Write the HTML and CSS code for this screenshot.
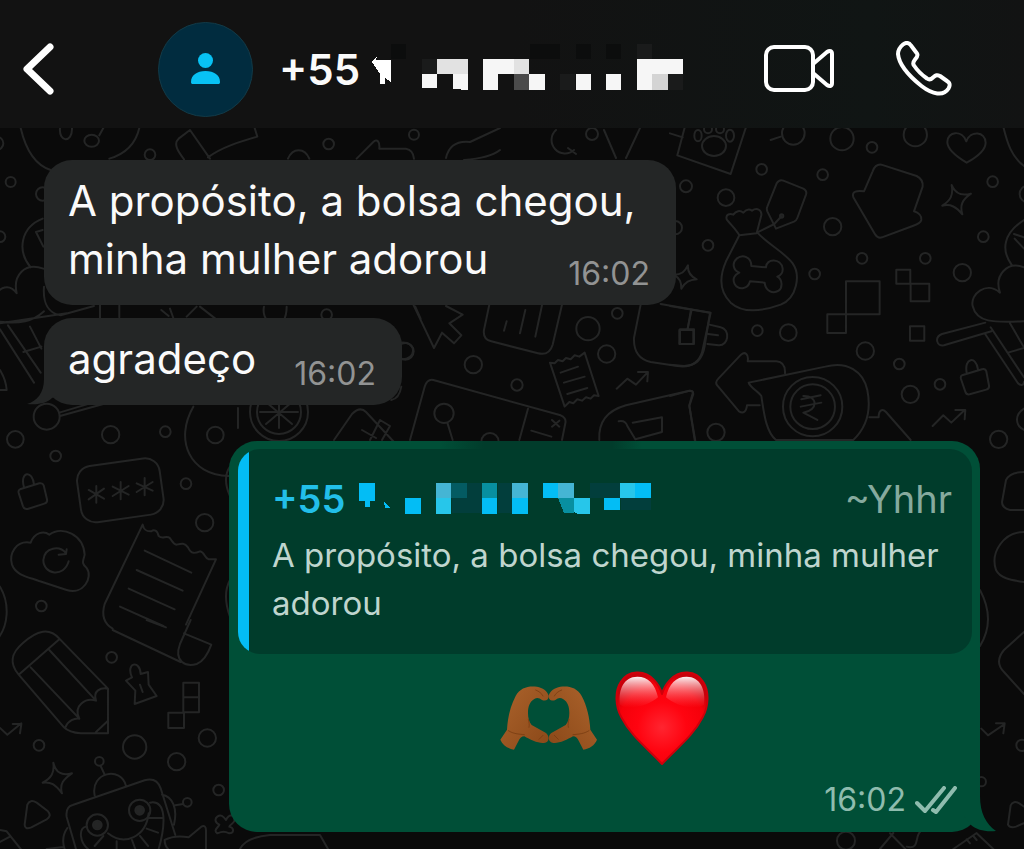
FILE: index.html
```
<!DOCTYPE html>
<html lang="pt-BR">
<head>
    <meta charset="UTF-8">
    <meta name="viewport" content="width=device-width, initial-scale=1.0">
    <title>Chat</title>
    <link rel="stylesheet" href="styles.css">
</head>
<body>
    <header class="chat-header">
        <button class="icon-button back" type="button" aria-label="Voltar">
            <svg width="32" height="52" viewBox="0 0 32 52"><path d="M28 4 5 26 28 48"/></svg>
        </button>
        <svg class="avatar" width="95" height="95" viewBox="0 0 95 95" role="img" aria-label="Contato">
            <circle class="avatar-bg" cx="47.500" cy="47.500" r="47"/>
            <circle cx="47.500" cy="38.500" r="7.500"/>
            <path d="M33 60c0-7 6-11 14.500-11S62 53 62 60c0 1.500-.5 2-2 2H35c-1.500 0-2-.5-2-2Z"/>
        </svg>
        <h1 class="contact">
            <span>+55</span>
            <svg class="mosaic" width="312" height="50" viewBox="0 0 312 50" aria-hidden="true">
                <path fill="#0c0d0d" d="M19 0h15v15H19zM158 0h30v15h-30zM204 0h15v15h-15zM234 0h15v15h-15z"/>
                <path fill="#1a1b1b" d="M50 15h15v15H50zM188 30h15v16h-15zM296 30h15v16h-15zM265 0h15v15h-15z"/>
                <path fill="#fff" d="M0 18l5-6-1 4h15v22l-6-4v6H8V30z"/>
                <path fill="#f6f6f6" d="M50 30h15v14H50zM81 30h15v16l-15-1zM111 15h46v15h-31v16h-15zM157 30h16v16h-16zM204 30h15v16h-15zM234 30h15v16h-15zM265 15h46v15h-31v16h-15z"/>
                <path fill="#e2e2e2" d="M65 15h31v15H65zM142 15h15v15h-15z"/>
                <path fill="#4b4b4b" d="M142 30h15v16h-15z"/>
                <path fill="#d4d4d4" d="M280 30h16v16h-16z"/>
            </svg>
        </h1>
        <button class="icon-button" type="button" aria-label="Chamada de vídeo">
            <svg width="70" height="48" viewBox="0 0 70 48">
                <rect x="2" y="2" width="47" height="43" rx="8"/>
                <path d="M49 19 63 7c3-2 5-1 5 2v29c0 3-2 4-5 2L49 28"/>
            </svg>
        </button>
        <button class="icon-button" type="button" aria-label="Chamada de voz">
            <svg width="56" height="56" viewBox="0 0 56 56">
                <path d="M7 3.500c3-2.500 6-2 8 1l6 8c1.500 2.500 0 4-2 6-2 2.500-2.500 4-1 6 4 6 8 9.500 13 13 2 1.500 4 1 6-1 3-2.500 4-3 7-1.500l7 5c3 2 3.500 4 1.500 7.500-5 8-16 6-27-2.500C13 35 3 24 2 13c0-4 2-7 5-9.500Z"/>
            </svg>
        </button>
    </header>

    <main class="chat">
        <svg class="wallpaper" viewBox="0 128 1024 721" preserveAspectRatio="xMidYMin slice" aria-hidden="true">
            <!-- right side -->
            <g transform="translate(670 120) scale(.3333)">
                <path d="M50 0 22 106 182 162 235 0M0 40l38 12M302 60l30-10M1000 20c12 50 25 90 62 118"/>
                <ellipse cx="132" cy="78" rx="36" ry="30"/><ellipse cx="84" cy="47" rx="11" ry="17"/><ellipse cx="180" cy="47" rx="12" ry="18"/><circle cx="114" cy="28" r="12"/><circle cx="150" cy="28" r="12"/>
                <circle cx="370" cy="40" r="34"/><circle cx="516" cy="56" r="35"/><circle cx="606" cy="82" r="16"/><circle cx="736" cy="44" r="35"/>
                <path d="M890 128c-30-18-58-40-58-62 0-32 44-38 57-2 12-34 58-30 58 4 0 24-28 44-57 60Z"/>
                <circle cx="275" cy="148" r="16"/><circle cx="458" cy="164" r="16"/><circle cx="48" cy="199" r="18"/><circle cx="168" cy="233" r="25"/><circle cx="16" cy="323" r="20"/><circle cx="114" cy="376" r="16"/><circle cx="488" cy="320" r="26"/><circle cx="576" cy="415" r="16"/><circle cx="434" cy="462" r="16"/><circle cx="766" cy="415" r="16"/><circle cx="940" cy="350" r="16"/><circle cx="968" cy="185" r="16"/><circle cx="877" cy="458" r="26"/><circle cx="262" cy="632" r="16"/><circle cx="355" cy="638" r="25"/><circle cx="586" cy="693" r="26"/><circle cx="688" cy="732" r="16"/><circle cx="721" cy="823" r="26"/><circle cx="810" cy="793" r="16"/><circle cx="138" cy="937" r="26"/><circle cx="986" cy="958" r="26"/><circle cx="1074" cy="222" r="25"/>
                <path d="M320 190q8-13 20-8l60 24q12 6 8 18l-26 70q-3 8-10 11l-54 21-26-52q-3-8 0-14ZM335 288l-22 24-52 26"/><circle cx="335" cy="288" r="5"/>
                <path d="M208 346c-10-18-26-32-38-48-4-16 10-18 20-14 8-12 20-14 30-6 10-12 20-10 26-6 16-12 30 0 28 14l-14 54ZM208 346l-40 78c-22 50-20 90 14 124 40 36 100 24 150 6 50-20 60-90 36-124-26-34-70-54-106-92"/>
                <path d="M244 438l44 4c0-28 46-28 50 4 1 12-6 20-16 24 16 8 16 34 4 42-18 12-40 0-42-24l-44-4c-6 26-36 26-46 8-8-16 0-28 14-34-20-8-22-30-8-42 18-14 44-6 44 22Z"/>
                <path d="M582 214l26-60q8-22 26-20l106 34q20 10 18 32l-26 74c14 4 24 14 22 26-2 8-14 14-26 18l-92 34q-12 4-20-8l-66-112c-6-20 12-20 32-18Z"/>
                <path d="M845 195c10 24 26 34 58 26-26 18-34 34-26 62-18-22-34-32-60-26 24-16 34-30 28-62ZM54 436c-2 20 6 32 26 42-22 2-34 8-46 28 0-20-4-30-22-42 22 0 32-8 42-28Z"/>
                <path d="M528 484h101v99H528zM472 583h56v56h-56zM679 449h42v42h-42zM722 491h56v53h-56zM720 619h43v43h-43z"/>
                <path d="M1062 300c-62 40-70 90-36 136M1062 352l-30-10M1062 386l-28-30M1062 442c-50-20-90 24-72 76-40-36-90 4-82 40 12 50 60 50 154 46M946 608 816 642c-24 10-16 38 6 34l142-42M944 640l100 150c10 10 18 4 18-4M962 622l100 150M1020 610l42 72M1062 684l-48 14"/>
                <path d="M0 558l120 20-16 100q-10 60-62 60L0 734M62 574l-9 54M30 628h42v44H30zM118 614l34 8c30 6 24 56-6 54l-34-4M114 642l30 4"/>
                <path d="M345 760q2-34-26-36h-86c4-22-8-30-20-20l-68 72q-12 12-2 22l64 76q20 12 24-18h38M236 788l230-48c66-18 114 14 126 70 12 60 0 110-42 150H318c-30-24-36-80-44-132-10-14-34-26-38-40Z"/>
                <circle cx="428" cy="860" r="89"/><circle cx="428" cy="860" r="67"/><path d="M394 838l58-12M392 860l62-12M400 828c44-2 46 44 0 50l42 22"/>
                <path d="M0 828l60-16q10 0 8 8l-10 36 16 104M598 892h28c0-20 10-28 22-16l74 84M876 766l60-18q10-3 13 6l8 42q2 10-8 13l-50 14q-10 2-13-8l-13-38q-2-9 3-11ZM890 758c-8-44 28-52 34-10M788 918l32-32 24 22 40-38M856 870h30l-2 28M1062 866c-30 20-26 50 0 64"/>
            </g>
            <!-- left side, upper part -->
            <g transform="translate(0 120) scale(.3333)">
                <path d="M62 24c14 60 40 110 90 126M418 24q-16 70-90 92M180 24c-4 44 36 44 36 4v-8M310 24l-12 22"/><ellipse cx="275" cy="62" rx="22" ry="18"/>
                <circle cx="-10" cy="70" r="20"/><circle cx="450" cy="104" r="16"/><circle cx="32" cy="186" r="15"/><circle cx="0" cy="350" r="16"/><circle cx="128" cy="222" r="20"/><circle cx="986" cy="72" r="16"/><circle cx="1242" cy="44" r="15"/>
                <path d="M570 30l60 86M570 30l-34 26c-18 16 0 40 16 62M764 24l8 26c-48 14-104 30-148 62M864 116c14-34 50-34 64 0M1070 116l50-50c12-12 20 0 18 20h80q22 4 24 30"/>
                <path d="M128 296c-66 26-78 96-36 146M128 330l-20 6 22 44M130 446c-56-20-92 20-80 74-20-30-56-20-60 10M-10 604c70 10 110 0 142-30M132 500c-4 50 14 80 50 86l100-28M300 556v42M358 556v36M484 570l22 18M510 566l10 28M560 590l30-30M600 560l46 36M792 560c-4 20 0 30 10 42M860 560c0 20-2 30-10 42M0 628l102 160M24 616l98 142M90 620l34 66M70 696l54-16M0 610l200-30M0 750q18 30 20 60h-20"/><circle cx="980" cy="584" r="16"/>
                <path d="M1246 560l16 36M1204 668c48-4 46 52 0 50M1204 800q-6 36-30 40"/><circle cx="140" cy="890" r="39"/><path d="M178 878l100-30M180 888l130-36"/>
            </g>
            <!-- middle strip -->
            <g transform="translate(390 300) scale(.3333)">
                <path d="M70 14l62 130 24-46 36 32 22-24-36-36 40-26-50-26M298 14l-16 76q-4 28 22 34l140 36q34 8 44-26l28-120M350 64l-8 28M406 30l-16 70M456 16l-20 94M752 14l-20 100q-2 60 50 72l80 12q58 8 74-40l26-120-150-26M904 34l-12 56M868 90h42v42h-42z"/>
                <circle cx="46" cy="154" r="25"/><circle cx="250" cy="194" r="26"/><circle cx="381" cy="255" r="17"/><circle cx="594" cy="86" r="35"/><circle cx="682" cy="40" r="16"/><circle cx="650" cy="162" r="26"/><circle cx="162" cy="340" r="29"/><circle cx="300" cy="425" r="26"/>
                <path d="M60 420l44-160q8-24 26-20l382 106q18 8 14 24l-10 50M414 326l-26 94M424 392l60 18M486 360l22 20M508 362l-22 18M172 368l16 52M480 188l14 2 10-10 14 4 10-10 14 4 12-12 14 4 16-12 42 130-14-2-10 10-14-4-12 10-14-4-12 12-12-4-14 14ZM512 218l52-18M522 248l62-18M532 282l60-18M680 266l32-30 26 18 34-36M744 216h30l-2 28"/>
                <path d="M628 420c-4-60 30-90 80-104l190-44q12 0 12 10l-12 36 18 104M686 364q20-4 26 14l24 40 80-22v-44l-88 16"/>
            </g>
            <!-- flower and arrow under the second message -->
            <circle cx="279" cy="412" r="29"/><circle cx="279" cy="412" r="22"/><path d="M260 412h38M279 400v28M266 402l26 22M292 402l-26 22M334 440l18-26q8-8 14-2l28 30M370 440l10-20 10 6-8 14M362 430l14 8"/>
            <!-- left side, middle -->
            <g transform="translate(0 400) scale(.3333)">
                <circle cx="46" cy="118" r="25"/><circle cx="332" cy="104" r="26"/><circle cx="496" cy="95" r="16"/><circle cx="167" cy="168" r="16"/><circle cx="558" cy="251" r="16"/><circle cx="646" cy="105" r="25"/><circle cx="614" cy="368" r="26"/><circle cx="124" cy="618" r="16"/>
                <path d="M580 20c-58 100-10 206 106 208M690 200q-24 34 0 88M690 540q-24 44 0 110M714 24v60"/>
                <rect x="236" y="186" width="250" height="170" rx="44" transform="rotate(-8 361 271)"/>
                <path d="M289 258v50M266 270l46 26M312 266l-46 32M362 246v52M338 260l48 24M386 258l-48 30M434 234v52M410 250l48 22M458 246l-48 30"/>
                <path d="M60 268l58-18q10-2 13 6l10 42q2 10-8 13l-50 16q-10 2-14-8l-13-40q-2-9 4-11ZM72 262c-14-48 26-54 30-8"/>
                <path d="M92 428c-44-8-66 34-56 66 12 34 54 38 84 50l80 26c50 16 80-38 60-66-18-16-10-20-6-40-4-60-66-88-106-60-16-12-44-8-56 24ZM206 484c-14 50-76 40-76-4 4-40 50-44 68-20M176 464l22-2 2-14"/>
                <path d="M428 374c4 22 18 20 26 20 8-6 18-4 22 14 12 10 18 0 30 4 8 2 10 20 24 22 16-4 24-6 34 8 10 22 22 18 36 12 14 2 14 22 26 24l22 0-90 196M428 374 314 612c-10 34 0 60 24 74M434 452l140 66M410 510l138 62M386 566l138 62M360 620l130 58"/>
                <path d="M0 560c30 50 26 120-10 160"/>
            </g>
            <!-- left side, bottom -->
            <g transform="translate(0 620) scale(.3333)">
                <path d="M338 30l204 96M440 0l58 22M572 0l-32 72c-20 54 20 70 50 60 22-8 34-30 44-58l-82-34M56 164l122-106M56 164c-34-40-16-70 12-94 44-40 80-48 110-14l146 150v134h-82q-34-2-50-18ZM92 142l146 154M148 90l140 152M196 322c8-20 28-28 42-26-20-40 20-64 50-54-10-30 14-40 36-36M288 336l36-34"/>
                <circle cx="335" cy="112" r="16"/><circle cx="117" cy="376" r="16"/><circle cx="404" cy="381" r="35"/><circle cx="530" cy="425" r="26"/><circle cx="622" cy="354" r="26"/><circle cx="656" cy="510" r="16"/><circle cx="298" cy="424" r="13"/><circle cx="562" cy="547" r="13"/>
                <path d="M378 182l18-10c-20-44 24-54 26-10l22-6 2 38 24 34-66 24 2-40ZM420 194l8 22M550 188h47v44h-47zM550 232h47v45h-47zM505 278h47v46h-47zM0 324l22 20 42-34M38 312h26l-4 28M160 428c8 30 24 40 56 32-26 18-38 32-30 60-20-26-34-36-58-32 26-14 36-30 32-60ZM74 614l8-60q8-18 28-6l34 26q12 14-4 24l-46 24q-20 8-20-8Z"/>
                <path d="M228 687l-28-96q-4-30 18-36l216-74q36-10 48 24l44 140M284 526c-14-70 80-88 94-28M314 464l-12-26M486 524c30 4 48 40 36 90M526 556l24-4M202 624c-14 20-16 40-8 63M0 630l20 4 42 53M0 666l30-16M140 687l50-6"/>
                <circle cx="292" cy="615" r="32"/><circle cx="419" cy="571" r="32"/><circle class="solid" cx="292" cy="615" r="13"/><circle class="solid" cx="419" cy="571" r="13"/>
                <path d="M258 620c-24 6-18 48 6 67M324 640c50 40 114 10 122-60M450 548c52-10 46 70 26 139M444 594h44M440 626l34 12M420 648l24 30M396 660l10 27M310 648l-26 30M350 664v23"/>
                <path d="M494 660q30-16 72-8l38-32q14-6 14 10v57M494 660q0 16 10 27M652 590c10-8 18-2 26 10 10-20 24-16 26 0 0 10-16 14-16 20 16 4 14 20 0 20-14-6-20-6-36 0-14-10 4-18 6-26-14-6-14-18-6-24Z"/>
            </g>
            <!-- right side, bottom -->
            <g transform="translate(780 700) scale(.3333)">
                <path d="M604 86l20 20 50-34M648 70h26l-4 30M684 374l8-58q8-16 26-6l34 24M684 374q6 12 24 6l40-18M300 447l40-48M330 400l46 47M380 440c40 10 24-30 40-44M520 447l70-48M590 400l50 47M560 418l10 12M580 408l10 12"/>
                <circle cx="726" cy="136" r="17"/><circle cx="198" cy="422" r="27"/><circle cx="604" cy="245" r="14"/>
            </g>
            <!-- strips beside and below the reply -->
            <path d="M1024 472q-14 0-18 8l-4 22q0 6 8 8l14 0M1024 532c-20 0-34 20-28 38 4 8 14 10 28 12M1024 632l-20 18q-10 12 0 22l20 22M980 590q16 30 0 56M240 849q6-12 30-14h50l8 14"/>
            <!-- strip under the header -->
            <path d="M446 158q4-18 24-16l30-14M500 150q-10 8-36 10M556 130a13 13 0 1 0 18 20M568 148l8 6M604 130l12 28M640 128l-14 30"/>
            <circle cx="592" cy="134" r="6"/>
        </svg>

        <div class="messages">
            <article class="bubble incoming">
                <p>A propósito, a bolsa chegou, minha mulher adorou <time>16:02</time></p>
            </article>
            <article class="bubble incoming last">
                <p>agradeço <time>16:02</time></p>
                <svg class="tail" width="30" height="44" viewBox="0 0 30 44" aria-hidden="true"><path d="M17 0v18C17 32 10 40 0 43c12 1 20-1 25-6l5-2V0Z"/></svg>
            </article>
            <article class="bubble outgoing">
                <blockquote class="quote">
                    <div class="quote-head">
                        <span class="quote-number">+55
                            <svg class="mosaic" width="294" height="38" viewBox="0 0 294 38" aria-hidden="true">
                                <path fill="#033e45" d="M93 3h30v30H93zM139 3h16v30h-16zM231 3h31v15h-31zM262 18h30v12h-30z" opacity=".7"/>
                                <path fill="#03bdf5" d="M0 3h16v18h-5v6H6v-6H0zM25 22l6 6h-5zM46 18h16v16H46zM123 18h15v16h-15zM153 18h16v16h-16zM184 3h15v15h-15zM245 18h16v12h-16zM276 3h16v15h-16z"/>
                                <path fill="#27c6ea" d="M77 18h15v16H77zM261 3h15v15h-15zM215 18h16v16h-12l-4-2z"/>
                                <path fill="#45b5d4" d="M77 3h15v15H77zM153 3h16v15h-16zM199 3h16v15h-16z"/>
                                <path fill="#088fa0" d="M123 3h15v15h-15zM199 18h16v15h-10z"/>
                                <path fill="#045b62" d="M92 3h16v15H92z"/>
                            </svg>
                        </span>
                        <span class="quote-name">~Yhhr</span>
                    </div>
                    <p>A propósito, a bolsa chegou, minha mulher adorou</p>
                </blockquote>
                <div class="emoji">
                    <svg width="98" height="66" viewBox="59 105 294 198" role="img" aria-label="Mãos em coração">
                        <defs>
                            <linearGradient id="skin" x1="0" y1="0" x2="1" y2="1">
                                <stop offset="0" stop-color="#ac632c"/>
                                <stop offset="1" stop-color="#8a4818"/>
                            </linearGradient>
                            <g id="hand">
                                <path fill="url(#skin)" d="M60 269 80 239C82 204 90 168 106 138 120 112 144 107 170 110c17 3 31 12 35 27 1 12-9 18-20 13-8-7-16-8-23-3-15 9-19 24-19 42 0 15 3 26 11 36l43 24c12 10 10 28-6 30-17 2-42-10-59-20-8 0-14 6-17 13l-14 27c-18-3-34-13-41-30Z"/>
                                <path fill="none" stroke="#74390f" stroke-width="3" stroke-linecap="round" opacity=".7" d="M84 242c16 10 30 10 48 12M146 232c2-8 0-16-2-24M166 120c10 4 18 10 22 18M176 268l12-12"/>
                            </g>
                        </defs>
                        <use href="#hand"/>
                        <use href="#hand" transform="translate(410 0) scale(-1 1)"/>
                    </svg>
                    <svg width="96" height="96" viewBox="400 62 288 288" role="img" aria-label="Coração vermelho">
                        <defs>
                            <radialGradient id="heart" cx=".5" cy=".6" r=".6">
                                <stop offset="0" stop-color="#ff2530"/>
                                <stop offset=".45" stop-color="#ff0410"/>
                                <stop offset=".8" stop-color="#f5000a"/>
                                <stop offset="1" stop-color="#c8000a"/>
                            </radialGradient>
                            <linearGradient id="shine" x1="0" y1="0" x2="0" y2="1">
                                <stop offset="0" stop-color="#fff" stop-opacity=".95"/>
                                <stop offset="1" stop-color="#ff5a62" stop-opacity="0"/>
                            </linearGradient>
                        </defs>
                        <path fill="url(#heart)" stroke="#cf000b" stroke-width="6" stroke-linejoin="round" d="M544 344C500 296 452 262 422 204 404 170 402 126 420 98c22-36 72-38 100-6 12 13 20 26 24 42 4-16 12-29 24-42 28-32 78-30 100 6 18 28 16 72-2 106-30 58-78 92-122 140Z"/>
                        <path fill="url(#shine)" d="M418 166c-6-46 12-84 52-84 32 0 54 22 62 62-20 20-84 44-114 22ZM670 166c6-46-12-84-52-84-32 0-54 22-62 62 20 20 84 44 114 22Z"/>
                    </svg>
                </div>
                <div class="status">
                    <time>16:02</time>
                    <svg class="checks" width="42" height="28" viewBox="0 0 42 28" role="img" aria-label="Entregue"><path d="M2 17l8 8L29 2M18 24l3 2L40 2"/></svg>
                </div>
                <svg class="tail" width="32" height="36" viewBox="0 0 32 36" aria-hidden="true"><path d="M16 0c0 17 6 28 16 35-11 1-19-1-25-6L0 20V0Z"/></svg>
            </article>
        </div>
    </main>
</body>
</html>
```
FILE: styles.css
```
* {
    box-sizing: border-box;
}
body {
    margin: 0;
    min-height: 100vh;
    display: flex;
    flex-direction: column;
    background-color: #0a0a0a;
    color: #fafafa;
    font-family: Inter, "Liberation Sans", sans-serif;
}
h1, p, blockquote {
    margin: 0;
}
.chat-header {
    display: flex;
    align-items: center;
    height: 128px;
    padding: 10px 72px 0 22px;
    background: linear-gradient(to right, #121212 50%, #101514 85%, #121313);
}
.icon-button {
    display: flex;
    padding: 0;
    border: 0;
    background: none;
    cursor: pointer;
}
.icon-button + .icon-button {
    margin-left: 62px;
}
.icon-button path,
.icon-button rect {
    fill: none;
    stroke: #fff;
    stroke-width: 4;
    stroke-linecap: round;
    stroke-linejoin: round;
}
.back path {
    stroke-width: 7;
}
.avatar {
    flex: none;
    margin-left: 104px;
    fill: #08c2f4;
}
.avatar-bg {
    fill: #012c3f;
    stroke: #133a47;
}
.contact {
    display: flex;
    align-items: center;
    flex: 1;
    gap: 12px;
    margin-left: 26px;
    font-size: 42px;
    font-weight: 600;
}
.mosaic {
    shape-rendering: crispEdges;
}
.chat {
    position: relative;
    flex: 1;
    overflow: hidden;
}
/* doodles behind the messages */
.wallpaper {
    position: absolute;
    inset: 0;
    width: 100%;
    height: 100%;
    fill: none;
    stroke: #242525;
    stroke-width: 2;
    stroke-linecap: round;
    stroke-linejoin: round;
}
.wallpaper g {
    stroke-width: 6;
}
.wallpaper .solid {
    fill: #242525;
}
.messages {
    position: relative;
    display: flex;
    flex-direction: column;
    align-items: flex-start;
    padding: 32px 44px 17px;
}
.bubble {
    position: relative;
    border-radius: 28px;
}
.incoming {
    max-width: 632px;
    margin-bottom: 13px;
    padding: 12px 26px 17px 24px;
    background-color: #242626;
    font-size: 42px;
    line-height: 58px;
}
.last {
    margin-bottom: 36px;
}
time {
    color: #929393;
    font-size: 32px;
}
.incoming time {
    float: right;
    margin: 30px 0 0 38px;
    line-height: 28px;
}
.tail {
    position: absolute;
    bottom: 0;
}
.incoming .tail {
    left: -17px;
    fill: #242626;
}
.outgoing {
    align-self: flex-end;
    width: 82%;
    max-width: 751px;
    padding: 8px 8px 14px 9px;
    background: linear-gradient(to right, transparent 28%, #013c2b 34%, #013c2b 51%, transparent 55%) no-repeat 0 0 / 100% 12px #004f37;
}
.outgoing .tail {
    right: -16px;
    fill: #004f37;
}
.quote {
    min-height: 205px;
    padding: 18px 20px 26px 34px;
    border-radius: 22px;
    background: linear-gradient(to right, #03bdf5 11px, #003c2b 11px);
    color: #bfd5ce;
    font-size: 33px;
    line-height: 48px;
}
.quote-head {
    display: flex;
    justify-content: space-between;
    font-size: 38px;
    line-height: 64px;
}
.quote-number {
    display: flex;
    align-items: center;
    gap: 14px;
    color: #22bfe9;
    font-weight: 600;
}
.quote-name {
    color: #86aa9e;
}
.emoji {
    display: flex;
    align-items: center;
    justify-content: center;
    gap: 16px;
    margin-top: 16px;
}
.status {
    display: flex;
    align-items: center;
    justify-content: flex-end;
    gap: 9px;
    margin-top: 16px;
    padding-right: 15px;
    line-height: 36px;
}
.status time {
    color: #8fbcae;
}
.checks path {
    fill: none;
    stroke: #8fbcae;
    stroke-width: 4;
    stroke-linecap: round;
    stroke-linejoin: round;
}
```
